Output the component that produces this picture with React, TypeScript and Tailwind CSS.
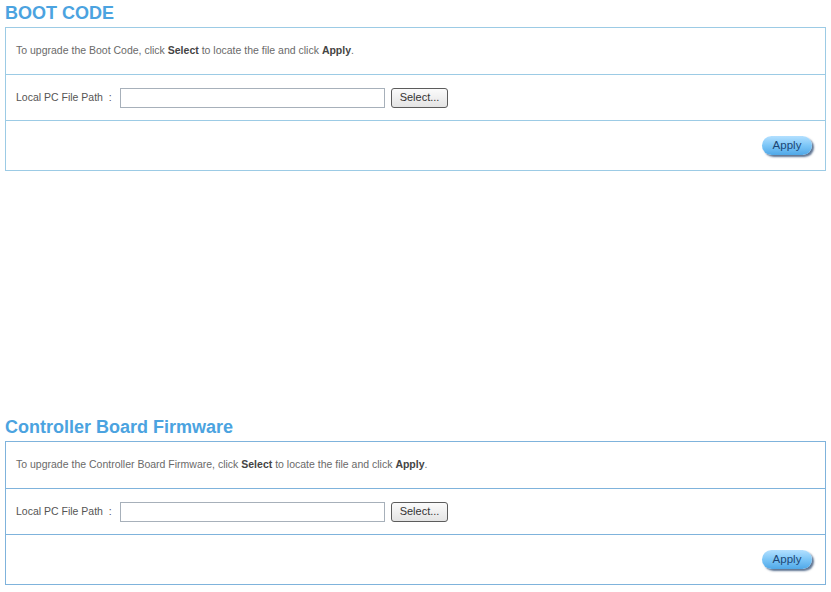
import React from 'react';

const font = { fontFamily: '"Liberation Sans", Arial, sans-serif' };

interface UpgradeSectionProps {
  title: string;
  target: string;
  border: string;
}

const UpgradeSection: React.FC<UpgradeSectionProps> = ({ title, target, border }) => {
  return (
    <div>
      <h2 className="pt-[2px] mb-[3px] text-[18px] leading-[22px] font-bold text-[#4ba3e0]">{title}</h2>
      <div className={`mr-[5px] border ${border}`}>
        {/* Description */}
        <div className={`h-[47px] flex items-center pl-[10px] text-[10.5px] text-[#6a6a6a] border-b ${border}`}>
          <span>
            To upgrade the {target}, click <b className="text-[#444]">Select</b> to locate the file and click{' '}
            <b className="text-[#444]">Apply</b>.
          </span>
        </div>

        {/* File path */}
        <div className={`h-[46px] flex items-center pl-[10px] text-[10.5px] text-[#555] border-b ${border}`}>
          <span className="w-[104px]">Local PC File Path&nbsp;&nbsp;:</span>
          <div className="w-[265px] h-[20px] border border-[#a7b0ba] bg-white" />
          <button className="ml-[6px] w-[57px] h-[20px] rounded-[3px] border border-[#5c5c5c] bg-gradient-to-b from-[#fbfbfb] to-[#e4e4e4] text-[11px] text-[#333] leading-none">
            Select...
          </button>
        </div>

        {/* Apply */}
        <div className="h-[49px] flex items-center justify-end pr-[13px]">
          <button className="w-[50px] h-[19px] rounded-full bg-gradient-to-b from-[#b3e0ff] via-[#7cc6f7] to-[#4fa8e8] text-[11.5px] leading-none text-[#1d4674] shadow-[2px_2px_2px_rgba(40,70,110,0.75)]">
            Apply
          </button>
        </div>
      </div>
    </div>
  );
};

export default function App() {
  return (
    <div className="w-[831px] h-[592px] bg-white pl-[5px] overflow-hidden" style={font}>
      <UpgradeSection title="BOOT CODE" target="Boot Code" border="border-[#9ccbe5]" />
      <div className="mt-[243px]">
        <UpgradeSection title="Controller Board Firmware" target="Controller Board Firmware" border="border-[#7fb3dc]" />
      </div>
    </div>
  );
}
